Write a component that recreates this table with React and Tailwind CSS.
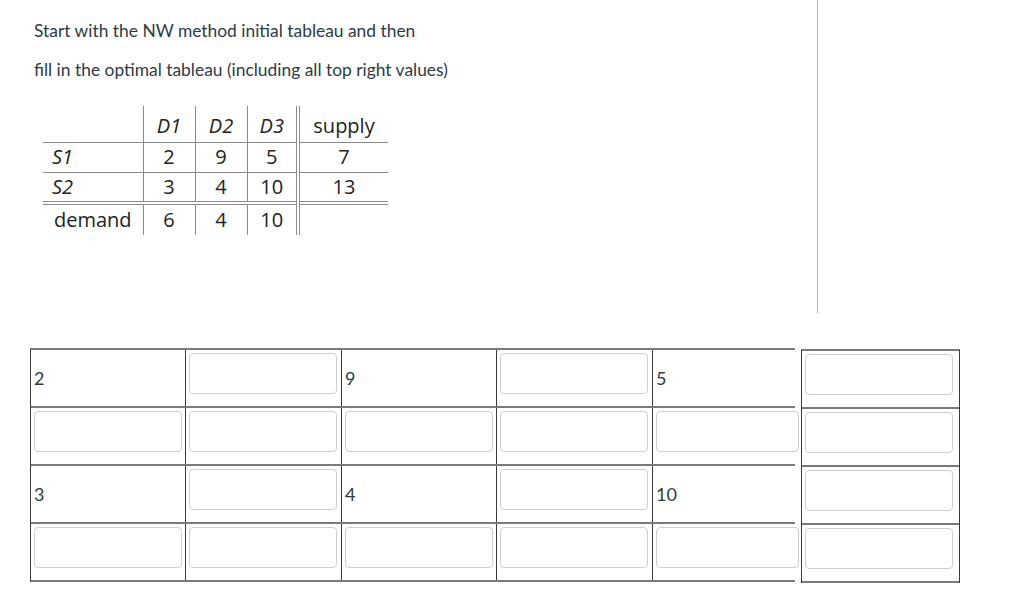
import React from 'react'

const lato = { fontFamily: 'Lato, "Open Sans", sans-serif' }

const Box = ({ wide }) => (
  <div className={`mt-[3px] ml-[3px] h-[41px] rounded-[4px] border border-[#cfcfcf] bg-white ${wide ? 'w-[143px]' : 'w-[148px]'}`} />
)

const Num = ({ v }) => (
  <div className="h-full flex items-center pl-[3px] text-[18px] text-[#2d3b45]">{v}</div>
)

const rows = [
  ['2', null, '9', null, '5'],
  [null, null, null, null, null],
  ['3', null, '4', null, '10'],
  [null, null, null, null, null],
]

const widths = ['w-[155px]', 'w-[156px]', 'w-[155px]', 'w-[156px]', 'w-[142px]']

const MiniTable = () => {
  const cell = 'text-center border-l border-[#8a8a8a]'
  return (
    <table className="mt-[24px] ml-[9px] border-collapse text-[20px] text-[#222] leading-none" style={{ fontFamily: '"Open Sans", "DejaVu Sans", sans-serif' }}>
      <tbody>
        <tr className="h-[36px] border-b border-[#8a8a8a]">
          <td className="w-[100px]"></td>
          <td className={`${cell} w-[52px] italic pt-[4px]`}>D1</td>
          <td className={`${cell} w-[52px] italic pt-[4px]`}>D2</td>
          <td className={`${cell} w-[51px] italic pt-[4px]`}>D3</td>
          <td className="w-[90px] pt-[4px] text-center border-l-[4px] border-double border-[#8a8a8a]">supply</td>
        </tr>
        <tr className="h-[30px] border-b border-[#8a8a8a]">
          <td className="pl-[9px] italic">S1</td>
          <td className={cell}>2</td>
          <td className={cell}>9</td>
          <td className={cell}>5</td>
          <td className="text-center border-l-[4px] border-double border-[#8a8a8a]">7</td>
        </tr>
        <tr className="h-[31px] border-b-[4px] border-double border-[#8a8a8a]">
          <td className="pl-[9px] italic">S2</td>
          <td className={cell}>3</td>
          <td className={cell}>4</td>
          <td className={cell}>10</td>
          <td className="text-center border-l-[4px] border-double border-[#8a8a8a]">13</td>
        </tr>
        <tr className="h-[32px]">
          <td className="pl-[11px]">demand</td>
          <td className={cell}>6</td>
          <td className={cell}>4</td>
          <td className={cell}>10</td>
          <td className="border-l-[4px] border-double border-[#8a8a8a]"></td>
        </tr>
      </tbody>
    </table>
  )
}

export default function App() {
  return (
    <div className="w-[1024px] h-[595px] bg-white overflow-hidden" style={lato}>
      {/* question area */}
      <div className="w-[818px] h-[313px] border-r border-[#b5b5b5] pt-[19px] pl-[34px]">
        <p className="text-[17.4px] leading-[24px] text-[#2d3b45]">Start with the NW method initial tableau and then</p>
        <p className="mt-[15px] text-[17.4px] leading-[24px] text-[#2d3b45]">fill in the optimal tableau (including all top right values)</p>
        <MiniTable />
      </div>

      {/* answer tableau */}
      <div className="flex mt-[35px] ml-[30px] items-start">
        <div className="border-t-2 border-l border-[#7a7a7a] border-l-[#3a3a3a]">
          {rows.map((r, i) => (
            <div key={i} className="flex h-[58px] border-b-2 border-[#7a7a7a]">
              {r.map((v, j) => (
                <div key={j} className={`${widths[j]} h-full flow-root ${j < 4 ? 'border-r border-[#3a3a3a]' : ''}`}>
                  {v ? <Num v={v} /> : <Box wide={j === 4} />}
                </div>
              ))}
            </div>
          ))}
        </div>
        <div className="mt-[1px] ml-[6px] w-[159px] border-t-2 border-x border-[#7a7a7a] border-x-[#3a3a3a]">
          {rows.map((_, i) => (
            <div key={i} className="h-[58px] flow-root border-b-2 border-[#7a7a7a]">
              <Box />
            </div>
          ))}
        </div>
      </div>
    </div>
  )
}
